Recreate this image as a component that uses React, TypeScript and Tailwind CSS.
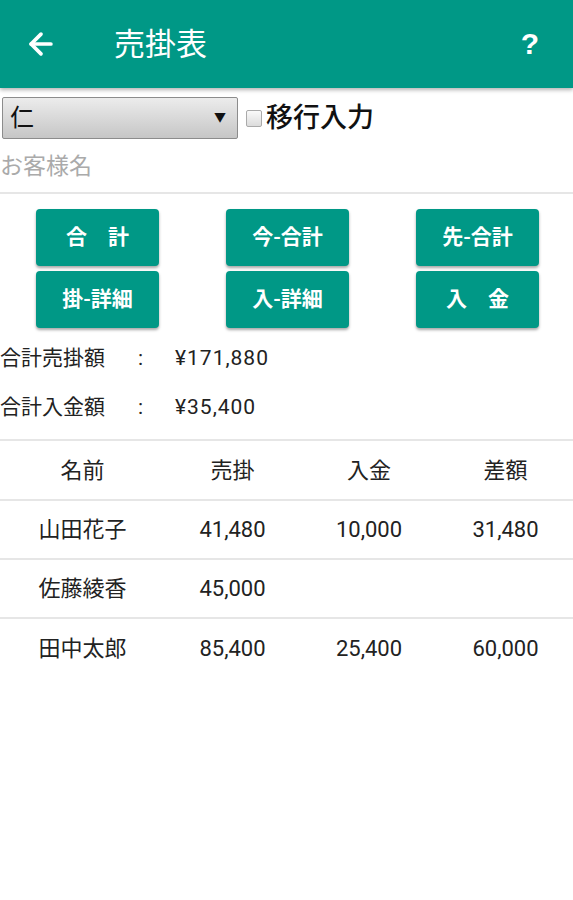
import { ArrowLeft } from "lucide-react";

const font = {
  fontFamily: '"Roboto", "Noto Sans CJK JP", sans-serif',
};

const buttons = [
  ["合\u3000計", "今-合計", "先-合計"],
  ["掛-詳細", "入-詳細", "入\u3000金"],
];

const rows = [
  { name: "山田花子", sales: "41,480", paid: "10,000", diff: "31,480" },
  { name: "佐藤綾香", sales: "45,000", paid: "", diff: "" },
  { name: "田中太郎", sales: "85,400", paid: "25,400", diff: "60,000" },
];

const cols = "grid grid-cols-[165px_135px_138px_135px]";

export default function App() {
  return (
    <div className="w-[573px] h-[900px] bg-white overflow-hidden" style={font}>
      {/* App bar */}
      <div className="h-[88px] bg-[#009886] flex items-center shadow-[0_2px_4px_rgba(0,0,0,0.3)] relative z-10">
        <ArrowLeft className="ml-[24px] w-[34px] h-[34px] text-white" strokeWidth={2.6} />
        <h1 className="ml-[56px] text-[31px] text-white font-normal leading-none">売掛表</h1>
        <span className="ml-auto mr-[34px] text-[30px] text-white font-bold leading-none" style={{ fontFamily: '"Liberation Sans", sans-serif' }}>
          ?
        </span>
      </div>

      {/* Select + checkbox */}
      <div className="flex items-center pt-[9px]">
        <div className="ml-[2px] w-[236px] h-[42px] border border-[#8c8c8c] rounded-[2px] bg-gradient-to-b from-[#ececec] to-[#c6c6c6] flex items-center px-[7px]">
          <span className="text-[24px] text-[#111] leading-none">仁</span>
          <span className="ml-auto mr-[4px] text-[12px] text-[#111]">▼</span>
        </div>
        <div className="ml-[8px] w-[16px] h-[17px] border border-[#aaa] rounded-[2px] bg-gradient-to-b from-[#fafafa] to-[#dcdcdc]" />
        <span className="ml-[4px] text-[27px] text-[#111] font-medium leading-none">移行入力</span>
      </div>

      {/* Customer name */}
      <div className="h-[55px] flex items-center border-b-2 border-[#e6e6e6] pt-[3px]">
        <span className="text-[23px] text-[#aaa]">お客様名</span>
      </div>

      {/* Buttons */}
      <div className="flex flex-col gap-[5px] pt-[15px]">
        {buttons.map((row, i) => (
          <div key={i} className="grid grid-cols-3">
            {row.map((label, j) => (
              <div key={j} className={j === 0 ? "pl-[36px]" : j === 1 ? "pl-[35px]" : "pl-[34px]"}>
                <button className="w-[123px] h-[57px] bg-[#009886] rounded-[4px] text-white text-[21px] font-semibold shadow-[0_2px_3px_rgba(0,0,0,0.35)]">
                  {label}
                </button>
              </div>
            ))}
          </div>
        ))}
      </div>

      {/* Totals */}
      <div className="pt-[6px] pb-[7px] border-b-2 border-[#e6e6e6] text-[21px] text-[#222]">
        <div className="flex items-center h-[49px]">
          <span className="w-[138px]">合計売掛額</span>
          <span className="w-[37px]">:</span>
          <span className="tracking-[1px]">¥171,880</span>
        </div>
        <div className="flex items-center h-[49px]">
          <span className="w-[138px]">合計入金額</span>
          <span className="w-[37px]">:</span>
          <span className="tracking-[1px]">¥35,400</span>
        </div>
      </div>

      {/* Table */}
      <div className="text-[22px] text-[#222]">
        <div className={`${cols} h-[60px] items-center text-center border-b-2 border-[#e6e6e6]`}>
          <span>名前</span>
          <span>売掛</span>
          <span>入金</span>
          <span>差額</span>
        </div>
        {rows.map((r, i) => (
          <div
            key={r.name}
            className={`${cols} h-[59px] items-center text-center ${i < rows.length - 1 ? "border-b-2 border-[#e6e6e6]" : ""}`}
          >
            <span>{r.name}</span>
            <span>{r.sales}</span>
            <span>{r.paid}</span>
            <span>{r.diff}</span>
          </div>
        ))}
      </div>
    </div>
  );
}
